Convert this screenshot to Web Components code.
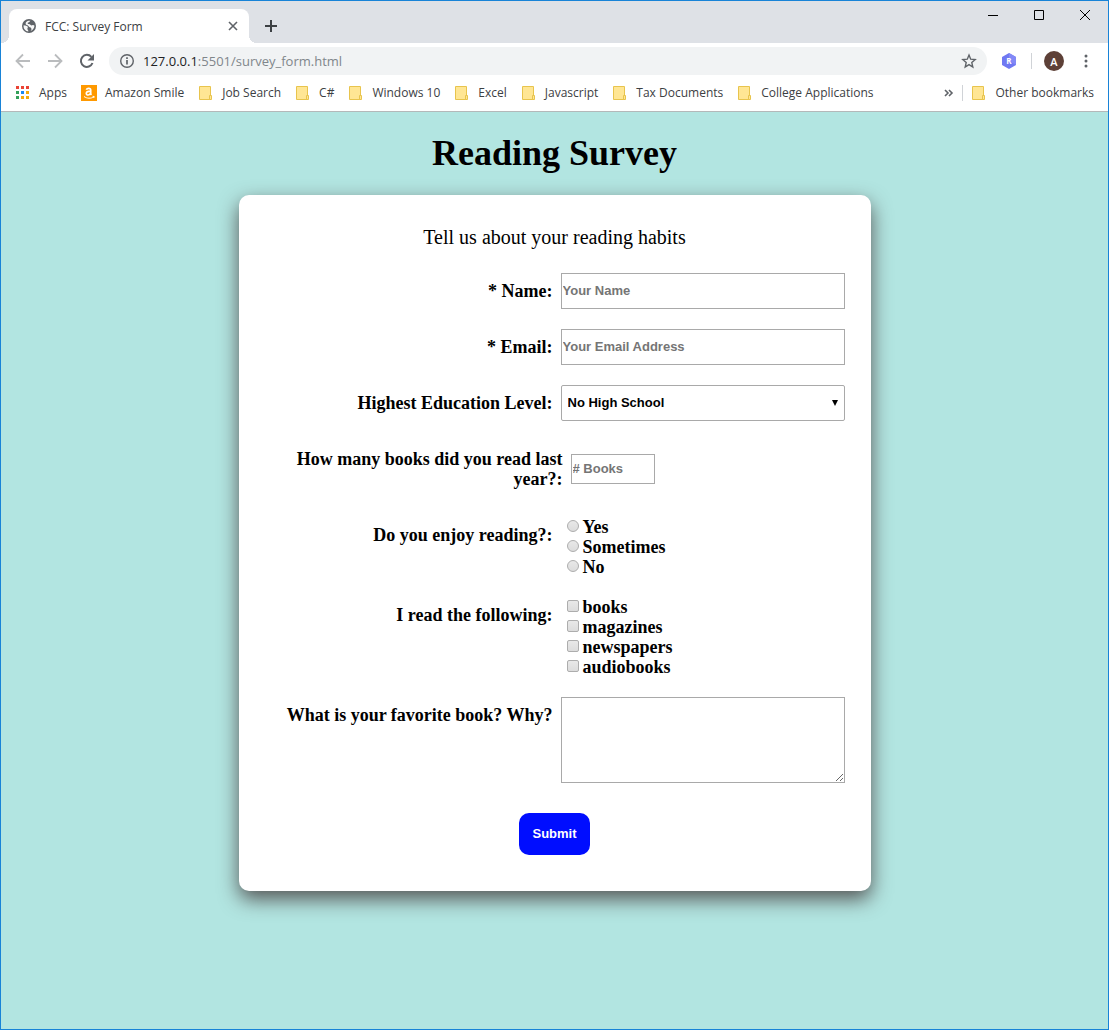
<!DOCTYPE html>
<html lang="en">
<head>
<meta charset="utf-8">
<meta name="viewport" content="width=device-width, initial-scale=1">
<title>FCC: Survey Form</title>
<style>
  body { margin: 0; font-family: "Open Sans", "Noto Sans", sans-serif; }
</style>
</head>
<body>
<browser-window>
  <tab-strip slot="chrome"></tab-strip>
  <address-bar slot="chrome"></address-bar>
  <bookmark-bar slot="chrome"></bookmark-bar>
  <survey-page></survey-page>
</browser-window>

<script>
const define = (name, html) => {
  const template = document.createElement('template');
  template.innerHTML = html;
  customElements.define(name, class extends HTMLElement {
    constructor() {
      super();
      this.attachShadow({ mode: 'open' }).append(template.content.cloneNode(true));
    }
  });
};

define('browser-window', `
  <style>
    :host { display: flex; flex-direction: column; box-sizing: border-box; min-height: 100vh; border: 1px solid #1883d7; background: #fff; }
    main { flex: 1; display: flex; flex-direction: column; }
  </style>
  <header><slot name="chrome"></slot></header>
  <main><slot></slot></main>`);

define('tab-strip', `
  <style>
    :host { display: flex; justify-content: space-between; height: 42px; background: #dee1e6; }
    .tabs { display: flex; align-items: flex-end; padding-left: 8px; }
    .tab { position: relative; display: flex; align-items: center; box-sizing: border-box; width: 240px; height: 34px; padding: 0 8px 0 12px; gap: 8px; background: #fff; border-radius: 8px 8px 0 0; font-size: 12px; color: #3c4043; }
    .tab::before, .tab::after { content: ""; position: absolute; bottom: 0; width: 8px; height: 8px; }
    .tab::before { right: 100%; background: radial-gradient(circle at 0 0, transparent 8px, #fff 8px); }
    .tab::after { left: 100%; background: radial-gradient(circle at 100% 0, transparent 8px, #fff 8px); }
    .title { flex: 1; }
    button { display: flex; align-items: center; justify-content: center; border: 0; padding: 0; background: none; }
    .close { width: 16px; height: 16px; }
    .new { width: 28px; height: 34px; margin-left: 8px; }
    .controls { display: flex; }
    .controls button { width: 46px; height: 28px; }
    svg { display: block; }
  </style>
  <div class="tabs">
    <div class="tab">
      <svg width="16" height="16" viewBox="0 0 16 16"><circle cx="8" cy="8" r="7" fill="#5f6368"/><path d="M2.6 7.2c2.2.2 3.7.6 4.200 1.600.4.900-.5 1.200-.4 2.200.1.800.9 1 1 2.500-3-.2-5.200-2.900-4.800-6.300zM9.400 2.700c-1 .5-.5 1.200-1.500 1.500-.9.300-1.500.5-1.200 1.400.3 1 2 .2 2.700 1.200.5.700 1.400.800 2 .500.7-.4 1.300-.1 2.100.500-.2 2.500-1.800 4.400-3.900 5.200.9-1.200 1.200-1.900.6-2.800-.6-.900-2-.7-2.400-1.600-.3-.8-1.300-1.600-2.700-1.900C3.700 4.400 6 2.300 9.400 2.700z" fill="#fff" opacity=".95"/></svg>
      <span class="title">FCC: Survey Form</span>
      <button class="close" aria-label="Close tab"><svg width="10" height="10" viewBox="0 0 10 10"><path d="M1 1l8 8M9 1L1 9" stroke="#5f6368" stroke-width="1.600"/></svg></button>
    </div>
    <button class="new" aria-label="New tab"><svg width="12" height="12" viewBox="0 0 12 12"><path d="M6 0v12M0 6h12" stroke="#3c4043" stroke-width="2"/></svg></button>
  </div>
  <div class="controls">
    <button aria-label="Minimize"><svg width="10" height="10" viewBox="0 0 10 10"><path d="M0 5.500h10" stroke="#000"/></svg></button>
    <button aria-label="Maximize"><svg width="10" height="10" viewBox="0 0 10 10"><path d="M.5.5h9v9h-9z" fill="none" stroke="#000"/></svg></button>
    <button aria-label="Close"><svg width="10" height="10" viewBox="0 0 10 10"><path d="M0 0l10 10M10 0L0 10" stroke="#000"/></svg></button>
  </div>`);

define('address-bar', `
  <style>
    :host { display: flex; align-items: center; height: 36px; padding: 0 14px; }
    button { display: flex; align-items: center; justify-content: center; border: 0; padding: 0; background: none; font: inherit; }
    nav { display: flex; gap: 16px; margin-right: 14px; }
    nav button { width: 16px; height: 16px; }
    .box { flex: 1; display: flex; align-items: center; gap: 8px; height: 28px; padding: 0 10px; border-radius: 14px; background: #f1f3f4; }
    .url { flex: 1; font-size: 13px; color: #80868b; }
    .url b { font-weight: 400; color: #202124; }
    .tools { display: flex; align-items: center; margin-left: 14px; }
    .line { width: 1px; height: 16px; margin: 0 12px 0 14px; background: #d0d3d7; }
    .avatar { width: 20px; height: 20px; border-radius: 50%; background: #5d4037; color: #fff; font: 600 11px "Open Sans", sans-serif; }
    .menu { width: 16px; height: 16px; margin-left: 14px; }
    svg { display: block; }
  </style>
  <nav aria-label="Navigation">
    <button aria-label="Back"><svg width="16" height="16" viewBox="0 0 16 16"><path d="M15 8H2M8 1.500L1.500 8 8 14.500" fill="none" stroke="#babcbe" stroke-width="1.800"/></svg></button>
    <button aria-label="Forward"><svg width="16" height="16" viewBox="0 0 16 16"><path d="M1 8h13M8 1.500L14.500 8 8 14.500" fill="none" stroke="#babcbe" stroke-width="1.800"/></svg></button>
    <button aria-label="Reload"><svg width="16" height="16" viewBox="0 0 16 16"><path d="M13.500 10A6 6 0 1 1 12.400 3.900" fill="none" stroke="#5f6368" stroke-width="2"/><path d="M15 1v6.500H8.500z" fill="#5f6368"/></svg></button>
  </nav>
  <div class="box">
    <svg width="16" height="16" viewBox="0 0 16 16"><circle cx="8" cy="8" r="6.300" fill="none" stroke="#5f6368" stroke-width="1.400"/><path d="M8 7v4.500M8 4.300v1.700" stroke="#5f6368" stroke-width="1.700"/></svg>
    <div class="url" role="textbox" aria-label="Address" tabindex="0"><b>127.0.0.1</b>:5501/survey_form.html</div>
    <button aria-label="Bookmark this page"><svg width="16" height="16" viewBox="0 0 16 16"><path d="M8 2l1.700 4.200 4.500.4-3.400 3 1 4.400L8 11.600 4.200 14l1-4.400-3.400-3 4.500-.4z" fill="none" stroke="#5f6368" stroke-width="1.400"/></svg></button>
  </div>
  <div class="tools">
    <button aria-label="Extension"><svg width="16" height="16" viewBox="0 0 16 16"><path d="M8 0l7 4v8l-7 4-7-4V4z" fill="#6f78f2"/><path d="M8 0l7 4v8L8 8z" fill="#8289f6"/><text x="8" y="11" text-anchor="middle" font-family="Open Sans" font-size="8" font-weight="700" fill="#fff">R</text></svg></button>
    <span class="line"></span>
    <button class="avatar" aria-label="Profile">A</button>
    <button class="menu" aria-label="Menu"><svg width="16" height="16" viewBox="0 0 16 16" fill="#5f6368"><circle cx="8" cy="3" r="1.500"/><circle cx="8" cy="8" r="1.500"/><circle cx="8" cy="13" r="1.500"/></svg></button>
  </div>`);

define('book-mark', `
  <style>
    :host { display: block; }
    a { display: flex; align-items: center; gap: 8px; color: #3c4043; text-decoration: none; white-space: nowrap; }
    svg, ::slotted(svg) { display: block; width: 16px; height: 16px; }
  </style>
  <a href="#"><slot name="icon"><svg viewBox="0 0 16 16"><path d="M1.500 1.500h11v13h-11z" fill="#ffe694" stroke="#e8c44d"/><path d="M11.500 10.500h2v4h-2z" fill="#ffe694" stroke="#e8c44d"/></svg></slot><slot></slot></a>`);

define('bookmark-bar', `
  <style>
    :host { display: flex; align-items: center; gap: 14px; height: 33px; padding: 0 14px 5px; border-bottom: 1px solid #b4b8b9; font-size: 12px; line-height: 16px; color: #3c4043; box-sizing: border-box; }
    .spacer { flex: 1; }
    .end { display: flex; align-items: center; gap: 8px; }
    button { display: flex; border: 0; padding: 0; background: none; }
    .line { width: 1px; height: 16px; background: #d0d3d7; }
  </style>
  <book-mark><svg slot="icon" viewBox="0 0 16 16"><path fill="#ea4335" d="M1 1h3v3H1zM6 1h3v3H6zM11 1h3v3h-3z"/><path fill="#34a05a" d="M1 6h3v3H1zM1 11h3v3H1z"/><path fill="#1a88f0" d="M6 6h3v3H6z"/><path fill="#f4a90b" d="M11 6h3v3h-3zM6 11h3v3H6zM11 11h3v3h-3z"/></svg>Apps</book-mark>
  <book-mark><svg slot="icon" viewBox="0 0 16 16"><path fill="#ff9900" d="M0 0h16v16H0z"/><path d="M5.300 4.700C6 3 9.700 2.800 9.700 5v3.500c0 .8.300 1 .8 1.400M9.600 6.200C7 6.200 5.300 6.800 5.300 8.400c0 2.200 3.500 2.200 4.400-.4" fill="none" stroke="#fff" stroke-width="1.700"/><path d="M3 11.500c3 2.200 7 2.200 9.800.4M11.500 11.300l1.700.2-.5 1.500" fill="none" stroke="#fff"/></svg>Amazon Smile</book-mark>
  <book-mark>Job Search</book-mark>
  <book-mark>C#</book-mark>
  <book-mark>Windows 10</book-mark>
  <book-mark>Excel</book-mark>
  <book-mark>Javascript</book-mark>
  <book-mark>Tax Documents</book-mark>
  <book-mark>College Applications</book-mark>
  <span class="spacer"></span>
  <div class="end">
    <button aria-label="More bookmarks"><svg width="10" height="8" viewBox="0 0 10 8"><path d="M1 1l3 3-3 3M5 1l3 3-3 3" fill="none" stroke="#5f6368" stroke-width="1.600"/></svg></button>
    <span class="line"></span>
    <book-mark>Other bookmarks</book-mark>
  </div>`);

define('form-row', `
  <style>
    :host { display: flex; gap: 8px; --field: 284px; }
    :host([compact]) { --field: 274px; align-items: center; }
    :host([choices]) .field { box-sizing: border-box; padding-left: 6px; }
    .label { flex: 1; padding: 8px 0; text-align: right; }
    .field { display: grid; flex: 0 1 var(--field); }
  </style>
  <div class="label"><slot name="label"></slot></div>
  <div class="field"><slot></slot></div>`);

define('survey-page', `
  <style>
    :host { flex: 1; background: #b2e5e1; color: #000; font: 700 18px/20px "Liberation Serif", serif; }
    h1 { margin: 21px 0 22px; font-size: 36px; line-height: 40px; text-align: center; }
    .card { box-sizing: border-box; max-width: 632px; margin: 0 auto 40px; padding: 32px 26px 36px; background: #fff; border-radius: 10px; box-shadow: 0 8px 20px #555; }
    p { margin: 0 0 26px; font-size: 20px; font-weight: 400; text-align: center; }
    form { display: flex; flex-direction: column; gap: 20px; }
    input, select, textarea, button { box-sizing: border-box; margin: 0; font: 700 13px "Liberation Sans", sans-serif; }
    input, select, textarea { border: 1px solid #a9a9a9; border-radius: 0; background: #fff; }
    input::placeholder { color: #757575; opacity: 1; }
    .text { width: 100%; height: 36px; padding: 0 1px 2px; }
    .number { width: 84px; height: 30px; padding: 0 1px 2px; }
    .pick { display: grid; align-items: center; }
    .pick > * { grid-area: 1 / 1; }
    .pick svg { justify-self: end; margin-right: 7px; pointer-events: none; }
    select { appearance: none; width: 100%; height: 36px; padding: 0 6px 2px; border-radius: 2px; color: #000; }
    textarea { display: block; width: 100%; height: 86px; padding: 2px; }
    .option { display: flex; align-items: center; gap: 4px; }
    .option input { appearance: none; width: 12px; height: 12px; margin-bottom: 2px; border: 1px solid #adadad; background: linear-gradient(#e8e8e8, #dcdcdc); }
    .option input[type=checkbox] { border-radius: 2px; }
    .option input[type=radio] { border-radius: 50%; }
    button { align-self: center; margin-top: 10px; height: 42px; padding: 0 13px 2px; border: 0; border-radius: 10px; background: #000dff; color: #fff; }
  </style>
  <h1>Reading Survey</h1>
  <section class="card">
    <p>Tell us about your reading habits</p>
    <form>
      <form-row><label slot="label" for="name">* Name:</label><input class="text" id="name" type="text" placeholder="Your Name"></form-row>
      <form-row><label slot="label" for="email">* Email:</label><input class="text" id="email" type="email" placeholder="Your Email Address"></form-row>
      <form-row><label slot="label" for="level">Highest Education Level:</label>
        <div class="pick"><select id="level"><option>No High School</option></select><svg width="6" height="6" viewBox="0 0 6 6"><path d="M0 0h6L3 6z"/></svg></div></form-row>
      <form-row compact><label slot="label" for="count">How many books did you read last year?:</label><input class="number" id="count" type="number" placeholder="# Books"></form-row>
      <form-row choices><span slot="label" id="enjoy">Do you enjoy reading?:</span>
        <div role="radiogroup" aria-labelledby="enjoy">
          <label class="option"><input type="radio" name="enjoy">Yes</label>
          <label class="option"><input type="radio" name="enjoy">Sometimes</label>
          <label class="option"><input type="radio" name="enjoy">No</label>
        </div></form-row>
      <form-row choices><span slot="label" id="kinds">I read the following:</span>
        <div role="group" aria-labelledby="kinds">
          <label class="option"><input type="checkbox">books</label>
          <label class="option"><input type="checkbox">magazines</label>
          <label class="option"><input type="checkbox">newspapers</label>
          <label class="option"><input type="checkbox">audiobooks</label>
        </div></form-row>
      <form-row><label slot="label" for="why">What is your favorite book? Why?</label><textarea id="why"></textarea></form-row>
      <button type="submit">Submit</button>
    </form>
  </section>`);
</script>
</body>
</html>
